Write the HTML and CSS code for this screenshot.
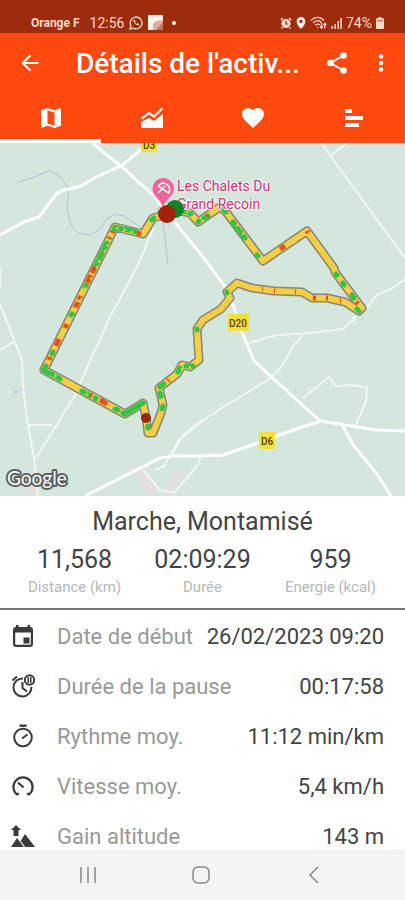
FILE: index.html
```html
<!DOCTYPE html>
<html lang="fr">
<head>
  <meta charset="UTF-8" />
  <meta name="viewport" content="width=device-width, initial-scale=1.0" />
  <title>Détails de l'activité</title>
  <link rel="stylesheet" href="styles.css">
</head>
<body>
  <div class="status-bar">
    <strong class="carrier">Orange F</strong>
    <span class="clock">12:56</span>
    <svg width="14" height="14" viewBox="0 0 14 14" fill="none" stroke="#ffd9cc" stroke-width="1.3">
      <path d="M1 13l1-3.2A5.9 5.9 0 1 1 4.300 12.100z"/>
      <path d="M4.500 4c-.8 1.500 2.600 5.700 5.100 5.500l.7-1.400-1.600-.8-.8.7C6.700 7.500 6.200 6.800 6 6l.6-.7L6 3.800z" fill="#ffd9cc" stroke="none"/>
    </svg>
    <svg width="15" height="15" viewBox="0 0 15 15">
      <rect width="15" height="15" rx="1" fill="#fff0eb"/>
      <path d="M15 5v10H5V9l3-3z" fill="#e3ad9d"/><path d="M15 7l-7 8h7z" fill="#bd7762"/>
    </svg>
    <span class="dot"></span>
    <div class="status-icons">
      <svg width="12" height="12" viewBox="0 0 12 12">
        <circle cx="6" cy="6.500" r="4.600" fill="#ffd9cc"/>
        <path d="M.8 3L3 1M11.200 3L9 1M2.500 10.500l-1 1M9.500 10.500l1 1" stroke="#ffd9cc" stroke-width="1.600"/>
        <path d="M6 4v3h2.300" fill="none" stroke="#9c2c0b" stroke-width="1.200"/>
      </svg>
      <svg width="10" height="12" viewBox="0 0 10 12"><path d="M5 0a4.400 4.400 0 0 0-4.400 4.400C.6 7.500 5 12 5 12s4.400-4.500 4.400-7.600A4.400 4.400 0 0 0 5 0zm0 2.700a1.700 1.700 0 1 1 0 3.400 1.700 1.700 0 0 1 0-3.400z" fill="#fff0eb"/></svg>
      <svg width="17" height="13" viewBox="0 0 17 13" fill="none" stroke="#ffd9cc" stroke-width="1.300">
        <path d="M1 4.500C5 .2 10.500.2 14 4.500M3.200 7c2.700-3 6-3 8.500-.3M5.300 9.300c1.500-1.500 3-1.500 4.400-.2M7 11.500h1M11.500 7v5M10 10.500l1.500 1.700 1.400-1.700M14.800 12.500v-5M13.400 9l1.400-1.700L16.200 9"/>
      </svg>
      <svg width="11" height="12" viewBox="0 0 11 12" stroke="#ffd9cc" stroke-width="1.500"><path d="M1.200 9v3M4.200 7v5M7.200 4v8M10 1v11"/></svg>
      <span>74%</span>
      <svg width="8" height="12" viewBox="0 0 8 12"><path d="M2.500 0h3v1.300H7q1 0 1 1V11q0 1-1 1H1q-1 0-1-1V2.300q0-1 1-1h1.500z" fill="#ffd9cc"/><path d="M1 3.800h6" stroke="#b4583e"/></svg>
    </div>
  </div>

  <header class="app-bar">
    <button class="icon-btn" aria-label="Retour">
      <svg width="18" height="18" viewBox="0 0 18 18" fill="none" stroke="#fff" stroke-width="2"><path d="M17.500 9H2M9.500 1.200L1.700 9l7.800 7.800"/></svg>
    </button>
    <h1>Détails de l'activ...</h1>
    <button class="icon-btn" aria-label="Partager">
      <svg width="20" height="22" viewBox="0 0 20 22" fill="#fff"><path d="M16.500 3.500L3.500 11l13 7.500" fill="none" stroke="#fff" stroke-width="2"/><circle cx="16.500" cy="3.500" r="3.300"/><circle cx="3.500" cy="11" r="3.300"/><circle cx="16.500" cy="18.500" r="3.300"/></svg>
    </button>
    <button class="icon-btn more-btn" aria-label="Plus">
      <svg width="6" height="18" viewBox="0 0 6 18" fill="#fff"><circle cx="3" cy="2.500" r="2.300"/><circle cx="3" cy="9" r="2.300"/><circle cx="3" cy="15.500" r="2.300"/></svg>
    </button>
  </header>

  <nav class="tabs">
    <button class="tab active" aria-label="Carte">
      <svg width="20" height="20" viewBox="0 0 20 20"><path d="M0 2.300L6.500 0l7 2.300L20 0v17.700L13.500 20l-7-2.300L0 20zM6.500 2.400v13.200l7 2.200V4.600z" fill="#fff" fill-rule="evenodd"/></svg>
    </button>
    <button class="tab" aria-label="Graphiques">
      <svg width="22" height="22" viewBox="0 0 22 22"><path d="M0 21v-6l8-4 5 3L22 7v14z" fill="#fff"/><path d="M.5 11.500L8 6l5 3.500L21.500 1.200" fill="none" stroke="#fff" stroke-width="2.200"/></svg>
    </button>
    <button class="tab" aria-label="Fréquence cardiaque">
      <svg width="22" height="20" viewBox="0 0 22 20"><path d="M11 20l-1.600-1.400C3.800 13.500 0 10.100 0 6a5.800 5.800 0 0 1 6-6c2 0 3.800.9 5 2.400A6.500 6.500 0 0 1 16 0a5.800 5.800 0 0 1 6 6c0 4.100-3.800 7.500-9.400 12.600z" fill="#fff"/></svg>
    </button>
    <button class="tab" aria-label="Intervalles">
      <svg width="18" height="18" viewBox="0 0 18 18" fill="#fff"><path d="M0 0h7v4H0zM0 7h18v4H0zM0 14h14v4H0z"/></svg>
    </button>
  </nav>

  <svg class="map" viewBox="0 143 405 353" role="img" aria-label="Parcours">
    <rect y="143" width="405" height="353" fill="#d5e6dd"/>
    <!-- built-up areas -->
    <path d="M130 466l9-2 9 14 14 16H147zM161 496l12-24 9 2-10 22zM25 483h12l1 13H25z" fill="#e4dfe3"/>
    <!-- streams -->
    <path class="stream" d="M18 182l15-4 17-8 11 8 8 11-2 20 4 16 8 8 11 2 9-5 8-11 8-5 9 2 17 12 11 2 6-21 6-8 7 3M163 222l5 42"/>
    <path d="M16 390v4M14 392h4" stroke="#a9bfe2"/>
    <!-- minor roads -->
    <g class="road minor">
      <path d="M154 227l-17 40-28 52-35 78-38 61"/>
      <path d="M0 268v20M0 304l22 56 1 28 4 31 7 39 4 38M0 350l14-8M28 425h24"/>
      <path d="M321 143l84 115M331 155l16-12M405 279l-14 10-14 6-10 12-15 12"/>
      <path d="M249 343l28-8 34-2 32-4 13-11M303 335l-10 11-11 20-10 11-19 12-44 27-30 24-15 26-9 4"/>
      <path d="M303 398l26-21 7 9 15-1 16 2-1 14-11 26"/>
      <path d="M203 419l-20 16-12 21M200 458l-2 7-24 28-14-3-17-20"/>
    </g>
    <!-- main roads -->
    <g class="road">
      <path d="M92 143l29 23 33 30 18 23 31 38 23 31 8 20 8 24 12 29 66 60"/>
      <path d="M0 235l24-13 15-5 18-24 7-3 17-4 15-9 25-11 21-17"/>
      <path d="M85 496l75-38 13-2h29l10-1 8 1 32-11 47-17 22-7 18 3 38 6 28 1M342 425l12 21 23 28 14 22"/>
    </g>

    <!-- recorded track, coloured by speed -->
    <path class="track-edge" d="M167 214L153 218 143 234 115 227 44 370 125 414 143 403 146 417 148 433H153L161 413 163 405 159 388 177 374 182 365 190 367 199 360 197 329 203 320 221 309 230 298 227 292 237 283 252 288 274 291 302 292 312 298 327 298 345 302 359 311 362 308 358 303 335 272 334 268 307 231 263 261 226 212 220 207 198 222 190 213 175 210"/>
    <path class="track-base" d="M167 214L153 218 143 234 115 227 44 370 125 414 143 403 146 417 148 433H153L161 413 163 405 159 388 177 374 182 365 190 367 199 360 197 329 203 320 221 309 230 298 227 292 237 283 252 288 274 291 302 292 312 298 327 298 345 302 359 311 362 308 358 303 335 272 334 268 307 231 263 261 226 212 220 207 198 222 190 213 175 210"/>
    <g class="track-part green">
      <path d="M154 218l-2 2M136 232l-11-3M122 229l-7-2-1 3M107 243l-8 16M98 261l-3 6M86 285l-1 2M72 314l-1 1M53 352l-1 2M46 366l-2 4 5 3M52 374l1 1M57 377l3 2M82 391l2 1M88 394l1 1M95 398l2 1M115 409l3 1M123 413l2 1 18-11M148 426v2M161 397v-2M162 409l1-3M161 397l-1-4M160 387l4-3M178 372l2-4M186 366l7 0M197 330v-1M227 293v-1M359 311l-2-2M354 298l-2-3M344 285l-1-2M337 275l-1-1M258 256l-1-1M245 238l-5-7M238 229l-5-7M226 212l-4-4M208 216l-4 2M199 221l-1 1M191 214l-2-1M186 212l-3-1"/>
    </g>
    <g class="track-part red">
      <path d="M141 234l-4-1M113 231l-1 2M110 237l-1 2M95 267l-3 6M91 275l-4 8M81 296l-2 4M78 302l-3 6M67 324l-2 4M59 339l-3 7M50 357l-1 3M90 395l2 1M100 400l7 4M168 381l1-1M262 289h1M274 291h1M295 292h1M313 298h3M326 298h2M340 301h1M358 304l-2-2M308 233l-1-2M285 246l-5 3M208 215l-1 1"/>
    </g>
    <path class="track-ticks" d="M107 245l2 1M104 251l2 1M98 261l2 1M96 267l2 1M90 278l2 1M84 288l2 1M80 299l2 1M75 308l2 1M56 375l-1 2M88 393l-1 2M99 399l-1 2M118 227l-1 2M125 229l-1 2M132 231l-1 2M188 211l-1 2M242 234l2-1M236 226l2-1M181 369l2 1M190 366v2M161 399h2"/>

    <g class="poi">
      <text x="177" y="191">Les Chalets Du</text>
      <text x="177" y="209">Grand Recoin</text>
    </g>
    <path d="M163 178a10.500 10.500 0 0 0-10.500 10.500c0 8 8 10 10.500 19 2.500-9 11-11 11-19A10.500 10.500 0 0 0 163 178z" fill="#f0669c"/>
    <path d="M158 193l7-7M158.500 186q4-5 8.500-1.500t1.500 8.500z" fill="none" stroke="#fff" stroke-width="1.500"/>
    <circle cx="175" cy="209" r="9" fill="#0e8129"/>
    <circle cx="167" cy="214" r="9" fill="#a1230b"/>
    <circle cx="146" cy="418" r="5" fill="#96280c"/>

    <g class="road-sign">
      <rect x="141" y="137" width="16" height="15"/><text x="149" y="149">D3</text>
      <rect x="228" y="314" width="21" height="17"/><text x="238" y="327">D20</text>
      <rect x="259" y="432" width="16" height="17"/><text x="267" y="445">D6</text>
    </g>
    <text class="google" x="7" y="485">Google</text>
  </svg>

  <section class="summary">
    <h2>Marche, Montamisé</h2>
    <dl class="totals">
      <div><dt>Distance (km)</dt><dd>11,568</dd></div>
      <div><dt>Durée</dt><dd>02:09:29</dd></div>
      <div><dt>Energie (kcal)</dt><dd>959</dd></div>
    </dl>
  </section>

  <dl class="details">
    <div class="row">
      <svg width="24" height="24" viewBox="0 0 24 24"><path d="M5 1h2.500v2h9V1H19v2q3 0 3 3v14q0 3-3 3H5q-3 0-3-3V6q0-3 3-3zM4.200 8.500V20q0 .8.800.8h14q.8 0 .8-.8V8.500zM12.500 13.500h6v6h-6z" fill="#3b3b3b" fill-rule="evenodd"/></svg>
      <dt>Date de début</dt><dd>26/02/2023 09:20</dd>
    </div>
    <div class="row">
      <svg width="24" height="24" viewBox="0 0 24 24" fill="none" stroke="#3b3b3b" stroke-width="2"><path d="M12 4.500A9 9 0 1 0 20.400 13M11.500 8v6l4.500 3.500M1.500 6.500L6 2.500"/><circle cx="18.500" cy="6" r="4.700"/><path d="M17.200 3v6M19.800 3v6" stroke-width="1.500"/></svg>
      <dt>Durée de la pause</dt><dd>00:17:58</dd>
    </div>
    <div class="row">
      <svg width="24" height="24" viewBox="0 0 24 24" fill="none" stroke="#3b3b3b" stroke-width="2"><circle cx="12" cy="13.500" r="8.800"/><path d="M8.500 1.700h7" stroke-width="2.400"/><path d="M11 14.500l5.500-4"/></svg>
      <dt>Rythme moy.</dt><dd>11:12 min/km</dd>
    </div>
    <div class="row">
      <svg width="24" height="24" viewBox="0 0 24 24" fill="none" stroke="#3b3b3b" stroke-width="2.200"><path d="M8 19.500l-2 1A9.600 9.600 0 1 1 18 20.500l-2-1M12.500 13.500L7 8.500"/></svg>
      <dt>Vitesse moy.</dt><dd>5,4 km/h</dd>
    </div>
    <div class="row">
      <svg width="24" height="24" viewBox="0 0 24 24" fill="#3b3b3b"><path d="M5 1l5 5H7.500v6h-5V6H0zM0 23l6-9 3 4 5-8 10 13z"/><path d="M9.500 17.500l4 5.500" stroke="#fff" stroke-width="1.200"/></svg>
      <dt>Gain altitude</dt><dd>143 m</dd>
    </div>
  </dl>

  <footer class="system-nav">
    <button aria-label="Applications récentes"><svg width="18" height="18" viewBox="0 0 18 18" stroke="#888" stroke-width="1.500"><path d="M2 1v16M9 1v16M16 1v16"/></svg></button>
    <button aria-label="Accueil"><svg width="18" height="18" viewBox="0 0 18 18" fill="none" stroke="#888" stroke-width="1.500"><rect x="1" y="1" width="16" height="16" rx="5"/></svg></button>
    <button aria-label="Précédent"><svg width="18" height="18" viewBox="0 0 18 18" fill="none" stroke="#888" stroke-width="1.500"><path d="M13 1L5 9l8 8"/></svg></button>
  </footer>
</body>
</html>
```
FILE: styles.css
```css
* {
  box-sizing: border-box;
}
body {
  margin: 0;
  height: 100vh;
  display: flex;
  flex-direction: column;
  overflow: hidden;
  background-color: #fff;
  color: #444;
  font-family: Roboto, sans-serif;
}
h1, h2, dl, dt, dd {
  margin: 0;
  font-weight: normal;
}
button {
  border: none;
  padding: 0;
  background: none;
  cursor: pointer;
}
svg {
  display: block;
  flex: none;
}

.status-bar {
  flex: none;
  height: 33px;
  padding: 12px 21px 0 31px;
  display: flex;
  align-items: center;
  gap: 5px;
  background-color: #9c2c0b;
  color: #ffd9cc;
  font-size: 14px;
}
.carrier {
  font-size: 12px;
}
.clock {
  margin-left: 5px;
}
.dot {
  width: 4px;
  height: 4px;
  margin-left: 4px;
  border-radius: 50%;
  background-color: #fff0eb;
}
.status-icons {
  margin-left: auto;
  display: flex;
  align-items: center;
  gap: 4px;
}

.app-bar {
  flex: none;
  height: 60px;
  padding: 0 10px 0 12px;
  display: flex;
  align-items: center;
  background-color: #ff490f;
}
.app-bar h1 {
  flex: 1;
  margin-left: 28px;
  color: #fff;
  font-size: 28px;
  font-weight: 500;
  white-space: nowrap;
}
.icon-btn {
  width: 36px;
  height: 36px;
  display: flex;
  align-items: center;
  justify-content: center;
}
.more-btn {
  width: 28px;
  margin-left: 12px;
}

.tabs {
  flex: none;
  height: 50px;
  display: flex;
  background-color: #ff490f;
}
.tab {
  flex: 1;
  display: flex;
  align-items: center;
  justify-content: center;
  border-top: 4px solid transparent;
  border-bottom: 4px solid transparent;
}
.tab.active {
  border-bottom-color: #fff;
}

.map {
  width: 100%;
  height: auto;
}
.stream {
  fill: none;
  stroke: #abc3df;
  stroke-width: 1;
}
.road {
  fill: none;
  stroke: #fff;
  stroke-width: 3;
  stroke-linejoin: round;
}
.road.minor {
  stroke: #f0f7f3;
  stroke-width: 2;
}
.track-edge, .track-base, .track-part {
  fill: none;
  stroke-linejoin: round;
  stroke-linecap: round;
}
.track-edge {
  stroke: #85857a;
  stroke-width: 9;
}
.track-base {
  stroke: #f5ce43;
  stroke-width: 6;
}
.track-part {
  stroke-width: 5;
}
.green {
  stroke: #2fc54a;
}
.red {
  stroke: #e8501f;
  stroke-linecap: butt;
}
.track-ticks {
  stroke: #f5ce43;
  stroke-width: 2;
}
.poi {
  font-size: 14px;
  fill: #cb3577;
  stroke: #f3f5f4;
  stroke-width: 2px;
  stroke-linejoin: round;
  paint-order: stroke;
}
.road-sign rect {
  fill: #fbdc3d;
}
.road-sign text {
  fill: #4d431c;
  font-size: 10px;
  font-weight: 500;
  text-anchor: middle;
}
.google {
  font-family: Lato, sans-serif;
  font-size: 19px;
  fill: #fff;
  stroke: #5c5f5e;
  stroke-width: 4px;
  stroke-linejoin: round;
  paint-order: stroke;
}

.summary {
  flex: none;
  padding: 10px 16px;
  border-bottom: 2px solid #777;
  text-align: center;
}
.summary h2 {
  font-size: 25px;
  line-height: 32px;
}
.totals {
  margin-top: 6px;
  display: grid;
  grid-template-columns: 117px 1fr 117px;
}
.totals div {
  display: flex;
  flex-direction: column-reverse;
}
.totals dd {
  font-size: 25px;
  line-height: 32px;
}
.totals dt {
  color: #b8b8b8;
  font-size: 15px;
  line-height: 22px;
}

.details {
  flex: 1;
  min-height: 0;
  overflow: hidden;
  padding-top: 1px;
}
.row {
  height: 50px;
  padding: 0 21px 0 11px;
  display: flex;
  align-items: center;
  font-size: 22px;
}
.row dt {
  margin-left: 22px;
  color: #999;
}
.row dd {
  margin-left: auto;
}

.system-nav {
  flex: none;
  height: 51px;
  padding: 0 34px 0 31px;
  display: flex;
  background-color: #f4f4f4;
}
.system-nav button {
  flex: 1;
  display: flex;
  align-items: center;
  justify-content: center;
}
```
